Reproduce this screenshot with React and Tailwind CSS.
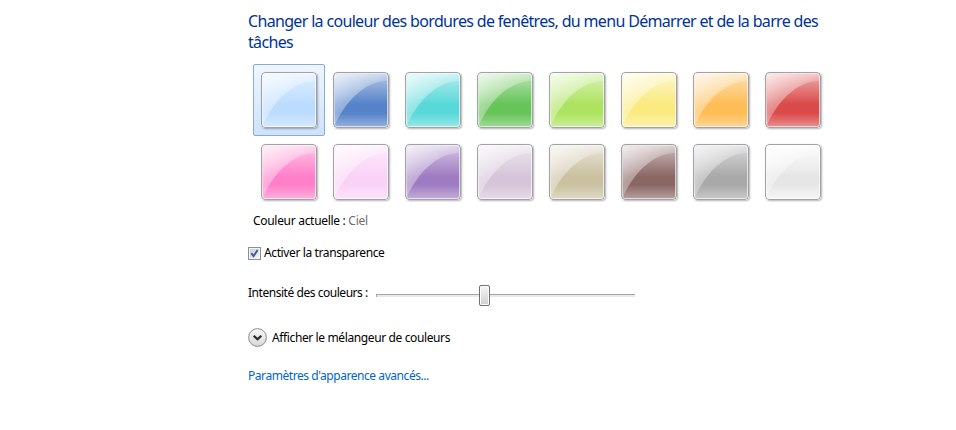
const SWATCHES = [
  ["Ciel", "#bbdcff"], ["Crépuscule", "#5582c8"], ["Mer", "#58d8d8"], ["Feuille", "#66c458"],
  ["Citron vert", "#ade360"], ["Soleil", "#fbea80"], ["Citrouille", "#ffbd55"], ["Rubis", "#da4a4a"],
  ["Fuchsia", "#ff7fc9"], ["Rougissement", "#fad2f7"], ["Violet", "#9f7cc1"], ["Lavande", "#d6c5d9"],
  ["Taupe", "#cbc1a1"], ["Chocolat", "#8a6765"], ["Ardoise", "#a9a9a9"], ["Givre", "#e6e6e6"],
];

function Gradients() {
  return (
    <svg width="0" height="0" className="absolute" aria-hidden="true">
      <defs>
        <linearGradient id="shade" x1="0" y1="0" x2="0" y2="1">
          <stop offset="0" stopColor="#fff" stopOpacity=".6" />
          <stop offset=".14" stopColor="#fff" stopOpacity=".42" />
          <stop offset=".58" stopColor="#fff" stopOpacity="0" />
          <stop offset=".74" stopColor="#fff" stopOpacity="0" />
          <stop offset="1" stopColor="#fff" stopOpacity=".38" />
        </linearGradient>
        <linearGradient id="gloss" gradientUnits="userSpaceOnUse" x1="2" y1="2" x2="34" y2="34">
          <stop offset="0" stopColor="#fff" stopOpacity=".72" />
          <stop offset="1" stopColor="#fff" stopOpacity=".16" />
        </linearGradient>
      </defs>
    </svg>
  );
}

function Swatch({ color, selected, frosted }) {
  return (
    <div
      className={
        selected
          ? "h-[72px] w-[72px] rounded-[2px] border border-[#84acdd] bg-gradient-to-b from-[#eff6fe] to-[#cfe2fc] p-[7px]"
          : "h-[72px] w-[72px] p-2"
      }
    >
      <svg width="56" height="56" viewBox="0 0 56 56" className="block rounded-[4px] shadow-[1px_1px_2px_rgba(0,0,0,0.3)]">
        <rect width="56" height="56" rx="4" fill="#fff" />
        <rect x="1" y="1" width="54" height="54" rx="3" fill={color} />
        <rect x="1" y="1" width="54" height="54" rx="3" fill="url(#shade)" />
        {frosted && <rect x="1" y="1" width="54" height="54" rx="3" fill="url(#shade)" />}
        <path d="M2 2H54V9C36 9 15 24 2 53Z" fill="url(#gloss)" />
        <rect x="1.5" y="1.5" width="53" height="53" rx="2.5" fill="none" stroke="#fff" strokeOpacity=".65" />
        <rect x=".5" y=".5" width="55" height="55" rx="3.5" fill="none" stroke="#9fa3a7" />
      </svg>
    </div>
  );
}

export default function App() {
  return (
    <main className="h-[430px] w-[956px] overflow-hidden bg-white pl-[248px] pt-[11px] font-['Noto_Sans','Open_Sans',sans-serif] text-[12px] leading-4 text-black">
      <Gradients />
      <h1 className="h-[42px] whitespace-nowrap text-[16px] leading-[21px] tracking-[-0.67px] text-[#003399]">
        Changer la couleur des bordures de fenêtres, du menu Démarrer et de la barre des
        <br />
        tâches
      </h1>
      <div className="ml-[5px] mt-[11px] grid w-[576px] grid-cols-8">
        {SWATCHES.map(([name, color], i) => (
          <Swatch key={name} color={color} selected={i === 0} frosted={name === "Givre"} />
        ))}
      </div>
      <p className="ml-[5px] mt-[5px] whitespace-nowrap tracking-[-0.3px]">
        Couleur actuelle : <span className="text-[#6d6d6d]">Ciel</span>
      </p>
      <div className="mt-4 flex h-4 items-center gap-[3px]">
        <span className="flex h-[13px] w-[13px] border border-[#8e8f8f] bg-[#f4f4f4] p-px">
          <svg width="9" height="9" viewBox="0 0 9 9" className="bg-gradient-to-br from-[#cbd0d8] to-[#f3f4f5]">
            <path d="M1.3 4.2 3.6 7.2 7.6 1" fill="none" stroke="#3f56a3" strokeWidth="1.9" />
          </svg>
        </span>
        <span className="whitespace-nowrap tracking-[-0.38px]">Activer la transparence</span>
      </div>
      <div className="mt-[23px] flex h-[22px] items-center">
        <span className="w-[128px] -translate-y-0.5 whitespace-nowrap tracking-[-0.46px]">Intensité des couleurs :</span>
        <div className="flex h-[22px] w-[259px] items-center">
          <div className="h-[3px] w-[103px] border-l border-t border-[#a5a5a5] bg-[#e7eaea]" />
          <div className="h-[21px] w-[11px] rounded-[2px] border border-[#707070] bg-gradient-to-b from-[#f4f4f4] via-[#e3e3e3] to-[#cfcfcf] shadow-[inset_0_0_0_1px_#fbfbfb]" />
          <div className="h-[3px] flex-1 border-t border-[#a5a5a5] bg-[#e7eaea]" />
        </div>
      </div>
      <div className="mt-[21px] flex h-5 items-center gap-[5px]">
        <svg width="19" height="19" viewBox="0 0 19 19">
          <defs>
            <linearGradient id="round" x1="0" y1="0" x2="0" y2="1">
              <stop offset="0" stopColor="#fafafa" />
              <stop offset=".5" stopColor="#e9e9e9" />
              <stop offset="1" stopColor="#d6d6d6" />
            </linearGradient>
          </defs>
          <circle cx="9.5" cy="9.5" r="8.9" fill="url(#round)" stroke="#8c8c8c" />
          <path d="M5.7 7.7 9.5 11.3 13.3 7.7" fill="none" stroke="#2b2b2b" strokeWidth="2.2" />
        </svg>
        <span className="translate-y-px whitespace-nowrap tracking-[-0.38px]">Afficher le mélangeur de couleurs</span>
      </div>
      <p className="mt-[21px] whitespace-nowrap tracking-[-0.44px] text-[#0066cc]">Paramètres d'apparence avancés...</p>
    </main>
  );
}
